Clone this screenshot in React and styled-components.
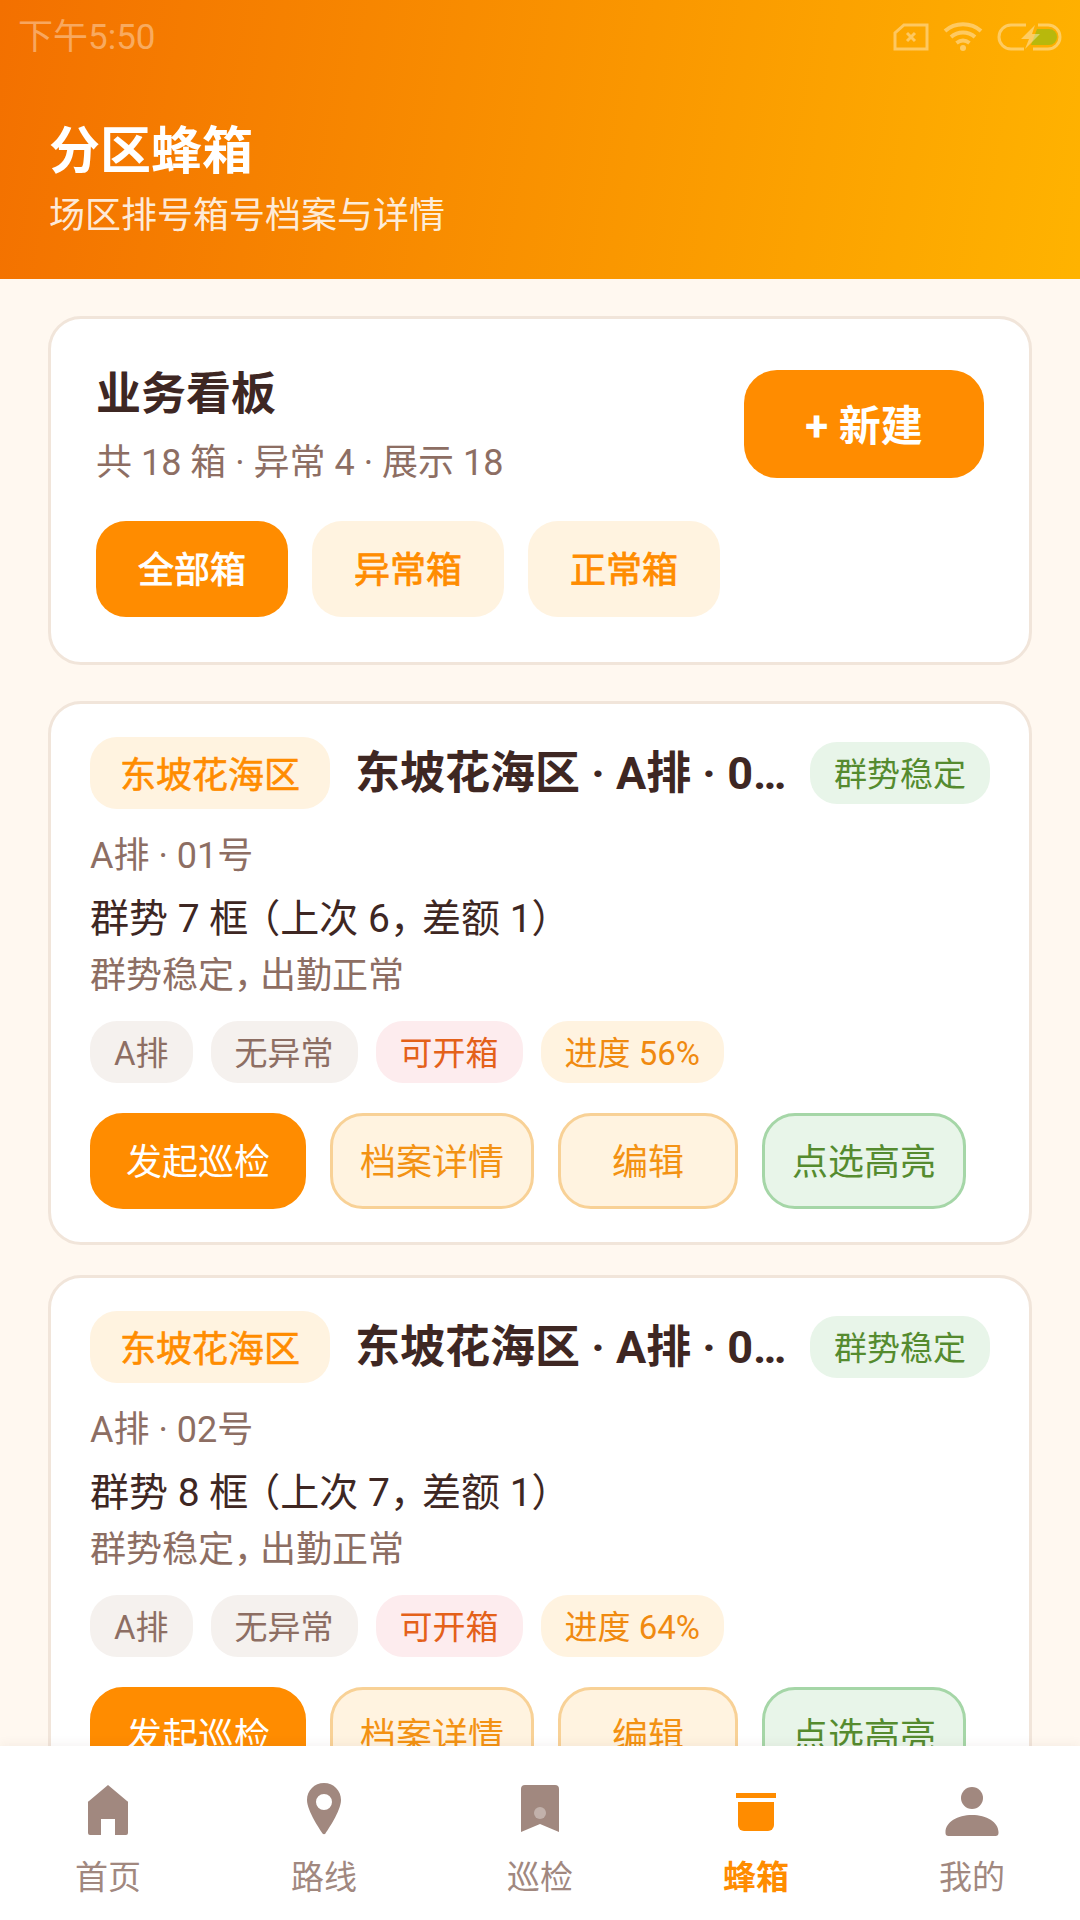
import React from "react";
import styled, { createGlobalStyle } from "styled-components";

const Global = createGlobalStyle`
  html, body { margin: 0; padding: 0; background: #fff8f0; }
  body { font-family: Roboto, "Noto Sans CJK SC", sans-serif; }
  * { box-sizing: border-box; }
`;

const Phone = styled.div`
  width: 1080px;
  height: 1920px;
  display: flex;
  flex-direction: column;
  overflow: hidden;
  background: #fff8f0;
`;

const Header = styled.header`
  height: 279px;
  flex: none;
  padding: 0 18px;
  background: linear-gradient(100deg, #f37000 0%, #ffb300 100%);
  color: #fff;
`;

const StatusBar = styled.div`
  height: 74px;
  display: flex;
  align-items: center;
  justify-content: space-between;
  color: rgba(255, 255, 255, 0.38);
`;

const Time = styled.span`
  font-size: 35px;
  padding-bottom: 7px;
`;

const StatusIcons = styled.div`
  display: flex;
  align-items: center;
  gap: 14px;
`;

const HeaderText = styled.div`
  padding: 44px 0 0 31px;
`;

const PageTitle = styled.h1`
  margin: 0;
  font-size: 51px;
  line-height: 68px;
  font-weight: 700;
`;

const PageSub = styled.div`
  margin-top: 6px;
  font-size: 36px;
  line-height: 48px;
  color: rgba(255, 255, 255, 0.86);
`;

const Content = styled.main`
  flex: 1;
  min-height: 0;
  overflow: hidden;
  padding: 37px 48px 0;
  display: flex;
  flex-direction: column;
  gap: 30px;
`;

const Card = styled.section`
  flex: none;
  background: #fff;
  border: 3px solid #f1e5da;
  border-radius: 33px;
  padding: ${(p) => (p.$board ? "45px" : "33px 39px")};
  margin-bottom: ${(p) => (p.$board ? "6px" : "0")};
`;

const BoardTop = styled.div`
  height: 120px;
  display: flex;
  align-items: center;
  justify-content: space-between;
`;

const BoardTitle = styled.h2`
  margin: 0;
  padding-top: 3px;
  font-size: 45px;
  line-height: 60px;
  font-weight: 700;
  color: #3e2723;
`;

const BoardSub = styled.div`
  margin-top: 14px;
  font-size: 36px;
  line-height: 48px;
  color: #8d6e63;
`;

const NewButton = styled.div`
  width: 240px;
  height: 108px;
  padding-bottom: 4px;
  display: flex;
  align-items: center;
  justify-content: center;
  border-radius: 33px;
  background: #ff8c00;
  color: #fff;
  font-size: 42px;
  font-weight: 700;
`;

const Filters = styled.div`
  margin-top: 37px;
  display: flex;
  gap: 24px;
`;

const Filter = styled.div`
  width: 192px;
  height: 96px;
  padding-bottom: 4px;
  display: flex;
  align-items: center;
  justify-content: center;
  border-radius: 30px;
  font-size: 36px;
  -webkit-text-stroke: 0.8px currentColor;
  background: ${(p) => (p.$active ? "#ff8c00" : "#fff3e0")};
  color: ${(p) => (p.$active ? "#fff" : "#ff8c00")};
`;

const CardHead = styled.div`
  display: flex;
  align-items: center;
  gap: 20px;
`;

const Zone = styled.span`
  flex: none;
  width: 240px;
  height: 72px;
  margin-right: 5px;
  padding-bottom: 2px;
  display: flex;
  align-items: center;
  justify-content: center;
  border-radius: 27px;
  background: #fff3e0;
  color: #ff8c00;
  font-size: 36px;
  -webkit-text-stroke: 0.6px currentColor;
`;

const BoxTitle = styled.h3`
  flex: 1;
  min-width: 0;
  margin: 0;
  padding-top: 2px;
  font-size: 45px;
  line-height: 60px;
  font-weight: 700;
  color: #3e2723;
  white-space: nowrap;
  overflow: hidden;
  text-overflow: ellipsis;
`;

const Status = styled.span`
  flex: none;
  height: 62px;
  padding: 0 24px 2px;
  display: flex;
  align-items: center;
  border-radius: 27px;
  background: #e8f5e9;
  color: #558b2f;
  font-size: 33px;
`;

const Meta = styled.div`
  margin-top: 23px;
  font-size: 36px;
  line-height: 48px;
  color: #8d6e63;
`;

const Strength = styled.div`
  margin-top: 12px;
  font-size: 39px;
  line-height: 54px;
  color: #3e2723;
`;

const Note = styled.div`
  margin-top: 6px;
  font-size: 36px;
  line-height: 48px;
  color: #8d6e63;
`;

/* the reference's CJK font sets punctuation narrower than Noto's full cell */
const Tight = styled.span`
  letter-spacing: ${(p) => p.$by}px;
`;

const chipTones = {
  gray: ["#f5f1ee", "#8d6e63"],
  red: ["#fdecee", "#e4611a"],
  orange: ["#fff3e0", "#f08a10"],
};

const Chips = styled.div`
  margin-top: 21px;
  display: flex;
  gap: 18px;
`;

const Chip = styled.span`
  height: 62px;
  padding: 0 24px 2px;
  display: flex;
  align-items: center;
  border-radius: 27px;
  font-size: 33px;
  background: ${(p) => chipTones[p.$tone][0]};
  color: ${(p) => chipTones[p.$tone][1]};
`;

const Actions = styled.div`
  margin-top: 30px;
  display: flex;
  gap: 24px;
`;

const actionTones = {
  primary: ["#ff8c00", "#ff8c00", "#fff"],
  plain: ["#fff3e0", "#f8d196", "#f39213"],
  green: ["#e8f5e9", "#a5d6a7", "#558b2f"],
};

const Action = styled.div`
  height: 96px;
  min-width: 180px;
  padding: 0 ${(p) => (p.$tone === "primary" ? "33px" : "27px")} 4px;
  display: flex;
  align-items: center;
  justify-content: center;
  border-radius: 33px;
  font-size: 36px;
  border: 3px solid ${(p) => actionTones[p.$tone][1]};
  background: ${(p) => actionTones[p.$tone][0]};
  color: ${(p) => actionTones[p.$tone][2]};
`;

const Nav = styled.nav`
  position: relative;
  z-index: 1;
  flex: none;
  height: 174px;
  display: grid;
  grid-template-columns: repeat(5, 1fr);
  background: #fff;
  box-shadow: 0 -3px 9px rgba(90, 60, 30, 0.05);
`;

const NavItem = styled.div`
  display: flex;
  flex-direction: column;
  align-items: center;
  padding-top: 34px;
  color: ${(p) => (p.$active ? "#ff8c00" : "#a1887f")};
`;

const NavLabel = styled.span`
  margin-top: 16px;
  font-size: 33px;
  line-height: 44px;
  font-weight: ${(p) => (p.$active ? 700 : 400)};
`;

const NavIcon = styled.svg`
  display: block;
  width: 60px;
  height: 60px;
  fill: currentColor;
`;

function SimIcon() {
  return (
    <svg width="36" height="30" viewBox="0 0 36 30" fill="none" stroke="currentColor" strokeWidth="3">
      <path d="M11 3h23v24H2V11z" />
      <path d="M14 11l8 8M22 11l-8 8" />
    </svg>
  );
}

function WifiIcon() {
  return (
    <svg width="40" height="30" viewBox="0 0 40 30" fill="none" stroke="currentColor" strokeWidth="4">
      <path d="M2 9c10-9 26-9 36 0" />
      <path d="M8 15c7-6 17-6 24 0" />
      <path d="M13.500 21c4-3 9-3 13 0" />
      <circle cx="20" cy="26" r="3" fill="currentColor" stroke="none" />
    </svg>
  );
}

function BatteryIcon() {
  return (
    <svg width="65" height="30" viewBox="0 0 65 30" fill="none">
      <path d="M40 7h12a8 8 0 0 1 0 16H34z" fill="#b8b80c" />
      <path d="M29 3H14a12 12 0 0 0 0 24h13M41 3h10a12 12 0 0 1 0 24H36" stroke="currentColor" strokeWidth="3" />
      <path d="M38 3L24 17h8l-4 10 15-15h-8z" fill="currentColor" />
    </svg>
  );
}

const HomeIcon = () => (
  <NavIcon viewBox="0 0 60 60">
    <path d="M30 5L49 21a1.500 1.500 0 0 1 1 2v30a2 2 0 0 1-2 2H37V39H23v16H12a2 2 0 0 1-2-2V23a1.500 1.500 0 0 1 1-2z" />
  </NavIcon>
);

const PinIcon = () => (
  <NavIcon viewBox="0 0 60 60">
    <path
      fillRule="evenodd"
      d="M30 3c-9.500 0-17 7.500-17 17C13 31 27 51 28.500 53.500c.8 1 2.200 1 3 0C33 51 47 31 47 20 47 10.500 39.500 3 30 3zm0 11a8 8 0 1 1 0 16 8 8 0 0 1 0-16z"
    />
  </NavIcon>
);

const MarkIcon = () => (
  <NavIcon viewBox="0 0 60 60">
    <path d="M15 5h30a4 4 0 0 1 4 4v43L30 44 11 52V9a4 4 0 0 1 4-4z" />
    <circle cx="30" cy="33" r="6" fill="#fff" fillOpacity="0.35" />
  </NavIcon>
);

const HiveIcon = () => (
  <NavIcon viewBox="0 0 60 60">
    <rect x="10" y="13" width="40" height="5" />
    <path d="M12 22h36v23a6 6 0 0 1-6 6H18a6 6 0 0 1-6-6z" />
  </NavIcon>
);

const UserIcon = () => (
  <NavIcon viewBox="0 0 60 60">
    <circle cx="30" cy="18" r="11" />
    <path d="M3.500 52c0-10 12-17 26.500-17s26.500 7 26.500 17v1a3 3 0 0 1-3 3H6.500a3 3 0 0 1-3-3z" />
  </NavIcon>
);

const boxes = [
  { no: "01", frames: 7, last: 6, progress: 56 },
  { no: "02", frames: 8, last: 7, progress: 64 },
];

const navItems = [
  { label: "首页", icon: <HomeIcon /> },
  { label: "路线", icon: <PinIcon /> },
  { label: "巡检", icon: <MarkIcon /> },
  { label: "蜂箱", icon: <HiveIcon />, active: true },
  { label: "我的", icon: <UserIcon /> },
];

function BoxCard({ box }) {
  return (
    <Card>
      <CardHead>
        <Zone>东坡花海区</Zone>
        <BoxTitle>东坡花海区 · A排 · {box.no}号</BoxTitle>
        <Status>群势稳定</Status>
      </CardHead>
      <Meta>A排 · {box.no}号</Meta>
      <Strength>
        群势 {box.frames} <Tight $by={-7}>框</Tight>（上次 {box.last}
        <Tight $by={-7}>，</Tight>差额 {box.frames - box.last}）
      </Strength>
      <Note>
        群势稳定<Tight $by={-10}>，</Tight>出勤正常
      </Note>
      <Chips>
        <Chip $tone="gray">A排</Chip>
        <Chip $tone="gray">无异常</Chip>
        <Chip $tone="red">可开箱</Chip>
        <Chip $tone="orange">进度 {box.progress}%</Chip>
      </Chips>
      <Actions>
        <Action $tone="primary">发起巡检</Action>
        <Action $tone="plain">档案详情</Action>
        <Action $tone="plain">编辑</Action>
        <Action $tone="green">点选高亮</Action>
      </Actions>
    </Card>
  );
}

export default function App() {
  return (
    <Phone>
      <Global />
      <Header>
        <StatusBar>
          <Time>下午5:50</Time>
          <StatusIcons>
            <SimIcon />
            <WifiIcon />
            <BatteryIcon />
          </StatusIcons>
        </StatusBar>
        <HeaderText>
          <PageTitle>分区蜂箱</PageTitle>
          <PageSub>场区排号箱号档案与详情</PageSub>
        </HeaderText>
      </Header>
      <Content>
        <Card $board>
          <BoardTop>
            <div>
              <BoardTitle>业务看板</BoardTitle>
              <BoardSub>共 18 箱 · 异常 4 · 展示 18</BoardSub>
            </div>
            <NewButton>+ 新建</NewButton>
          </BoardTop>
          <Filters>
            <Filter $active>全部箱</Filter>
            <Filter>异常箱</Filter>
            <Filter>正常箱</Filter>
          </Filters>
        </Card>
        {boxes.map((box) => (
          <BoxCard key={box.no} box={box} />
        ))}
      </Content>
      <Nav>
        {navItems.map((item) => (
          <NavItem key={item.label} $active={item.active}>
            {item.icon}
            <NavLabel $active={item.active}>{item.label}</NavLabel>
          </NavItem>
        ))}
      </Nav>
    </Phone>
  );
}
